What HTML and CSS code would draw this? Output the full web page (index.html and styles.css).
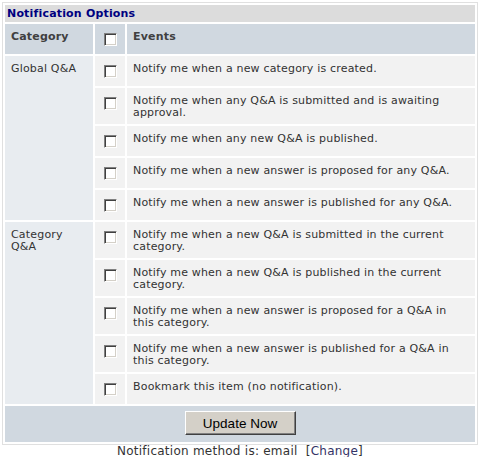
FILE: index.html
```html
<!DOCTYPE html>
<html>
<head>
<meta charset="utf-8">
<link rel="stylesheet" href="styles.css">
</head>
<body>
<div class="wrap">
<table class="notify">
  <colgroup><col class="c-cat"><col class="c-box"><col class="c-ev"></colgroup>
  <tr><th class="title" colspan="3">Notification Options</th></tr>
  <tr class="head">
    <th>Category</th>
    <th><input type="checkbox" class="cb"></th>
    <th>Events</th>
  </tr>
  <tr>
    <td class="cat" rowspan="5">Global Q&amp;A</td>
    <td class="box"><input type="checkbox" class="cb"></td>
    <td class="ev">Notify me when a new category is created.</td>
  </tr>
  <tr>
    <td class="box"><input type="checkbox" class="cb"></td>
    <td class="ev">Notify me when any Q&amp;A is submitted and is awaiting<br>approval.</td>
  </tr>
  <tr>
    <td class="box"><input type="checkbox" class="cb"></td>
    <td class="ev">Notify me when any new Q&amp;A is published.</td>
  </tr>
  <tr>
    <td class="box"><input type="checkbox" class="cb"></td>
    <td class="ev">Notify me when a new answer is proposed for any Q&amp;A.</td>
  </tr>
  <tr>
    <td class="box"><input type="checkbox" class="cb"></td>
    <td class="ev">Notify me when a new answer is published for any Q&amp;A.</td>
  </tr>
  <tr>
    <td class="cat" rowspan="5">Category<br>Q&amp;A</td>
    <td class="box"><input type="checkbox" class="cb"></td>
    <td class="ev">Notify me when a new Q&amp;A is submitted in the current<br>category.</td>
  </tr>
  <tr>
    <td class="box"><input type="checkbox" class="cb"></td>
    <td class="ev">Notify me when a new Q&amp;A is published in the current<br>category.</td>
  </tr>
  <tr>
    <td class="box"><input type="checkbox" class="cb"></td>
    <td class="ev">Notify me when a new answer is proposed for a Q&amp;A in<br>this category.</td>
  </tr>
  <tr>
    <td class="box"><input type="checkbox" class="cb"></td>
    <td class="ev">Notify me when a new answer is published for a Q&amp;A in<br>this category.</td>
  </tr>
  <tr>
    <td class="box"><input type="checkbox" class="cb"></td>
    <td class="ev">Bookmark this item (no notification).</td>
  </tr>
  <tr>
    <td class="foot" colspan="3"><button class="btn" type="button">Update Now</button></td>
  </tr>
</table>
</div>
<p class="method">Notification method is: email&nbsp; [<a href="#" class="change">Change</a>]</p>
</body>
</html>
```
FILE: styles.css
```css
body {
  margin: 2px;
  font-family: "DejaVu Sans", Verdana, sans-serif;
  font-size: 11px;
  letter-spacing: 0.18px;
  color: #333;
  background: #fff;
}
.wrap {
  width: 474px;
  border: 1px solid #e0e0e0;
}
.notify {
  width: 474px;
  border-collapse: separate;
  border-spacing: 2px;
  table-layout: fixed;
}
.c-cat { width: 88px; }
.c-box { width: 30px; }
.c-ev { width: 348px; }
.notify th, .notify td {
  padding: 7px 6px 5px;
  line-height: 12px;
  text-align: left;
  vertical-align: top;
  white-space: nowrap;
}
.notify th.title {
  background: #dcdcdc;
  color: #000080;
  font-weight: bold;
  padding: 3px 2px 2px;
  line-height: 12px;
}
.head th {
  background: #d0d8e0;
  color: #404040;
  font-weight: bold;
  padding: 7px 6px 5px;
}
.head th:nth-child(2) { padding: 6px 3px; }
.cat {
  background: #e8ecf0;
}
.box, .ev {
  background: #f2f2f2;
}
.notify td.box { padding: 6px 3px; }
.cb {
  -webkit-appearance: none;
  appearance: none;
  display: block;
  box-sizing: border-box;
  width: 13px;
  height: 13px;
  margin: 3px 3px 2px 6px;
  background: #fff;
  border: 1px solid;
  border-color: #808080 #fff #fff #808080;
  box-shadow: inset 1px 1px 0 #404040, inset -1px -1px 0 #d4d0c8;
}
.notify td.foot {
  background: #d0d8e0;
  text-align: center;
  padding: 5px 6px 7px;
}
.btn {
  box-sizing: border-box;
  width: 111px;
  height: 24px;
  margin: 0;
  padding: 0;
  background: #d4d0c8;
  border: 1px solid;
  border-color: #fff #404040 #404040 #fff;
  box-shadow: inset -1px -1px 0 #808080;
  font-family: "Liberation Sans", Arial, sans-serif;
  font-size: 13.5px;
  letter-spacing: 0;
  color: #000;
  vertical-align: top;
}
.method {
  margin: 0;
  width: 476px;
  text-align: center;
  font-size: 12px;
  letter-spacing: 0.25px;
  line-height: 12px;
  color: #333;
}
.change {
  color: #333366;
  text-decoration: none;
}
```
